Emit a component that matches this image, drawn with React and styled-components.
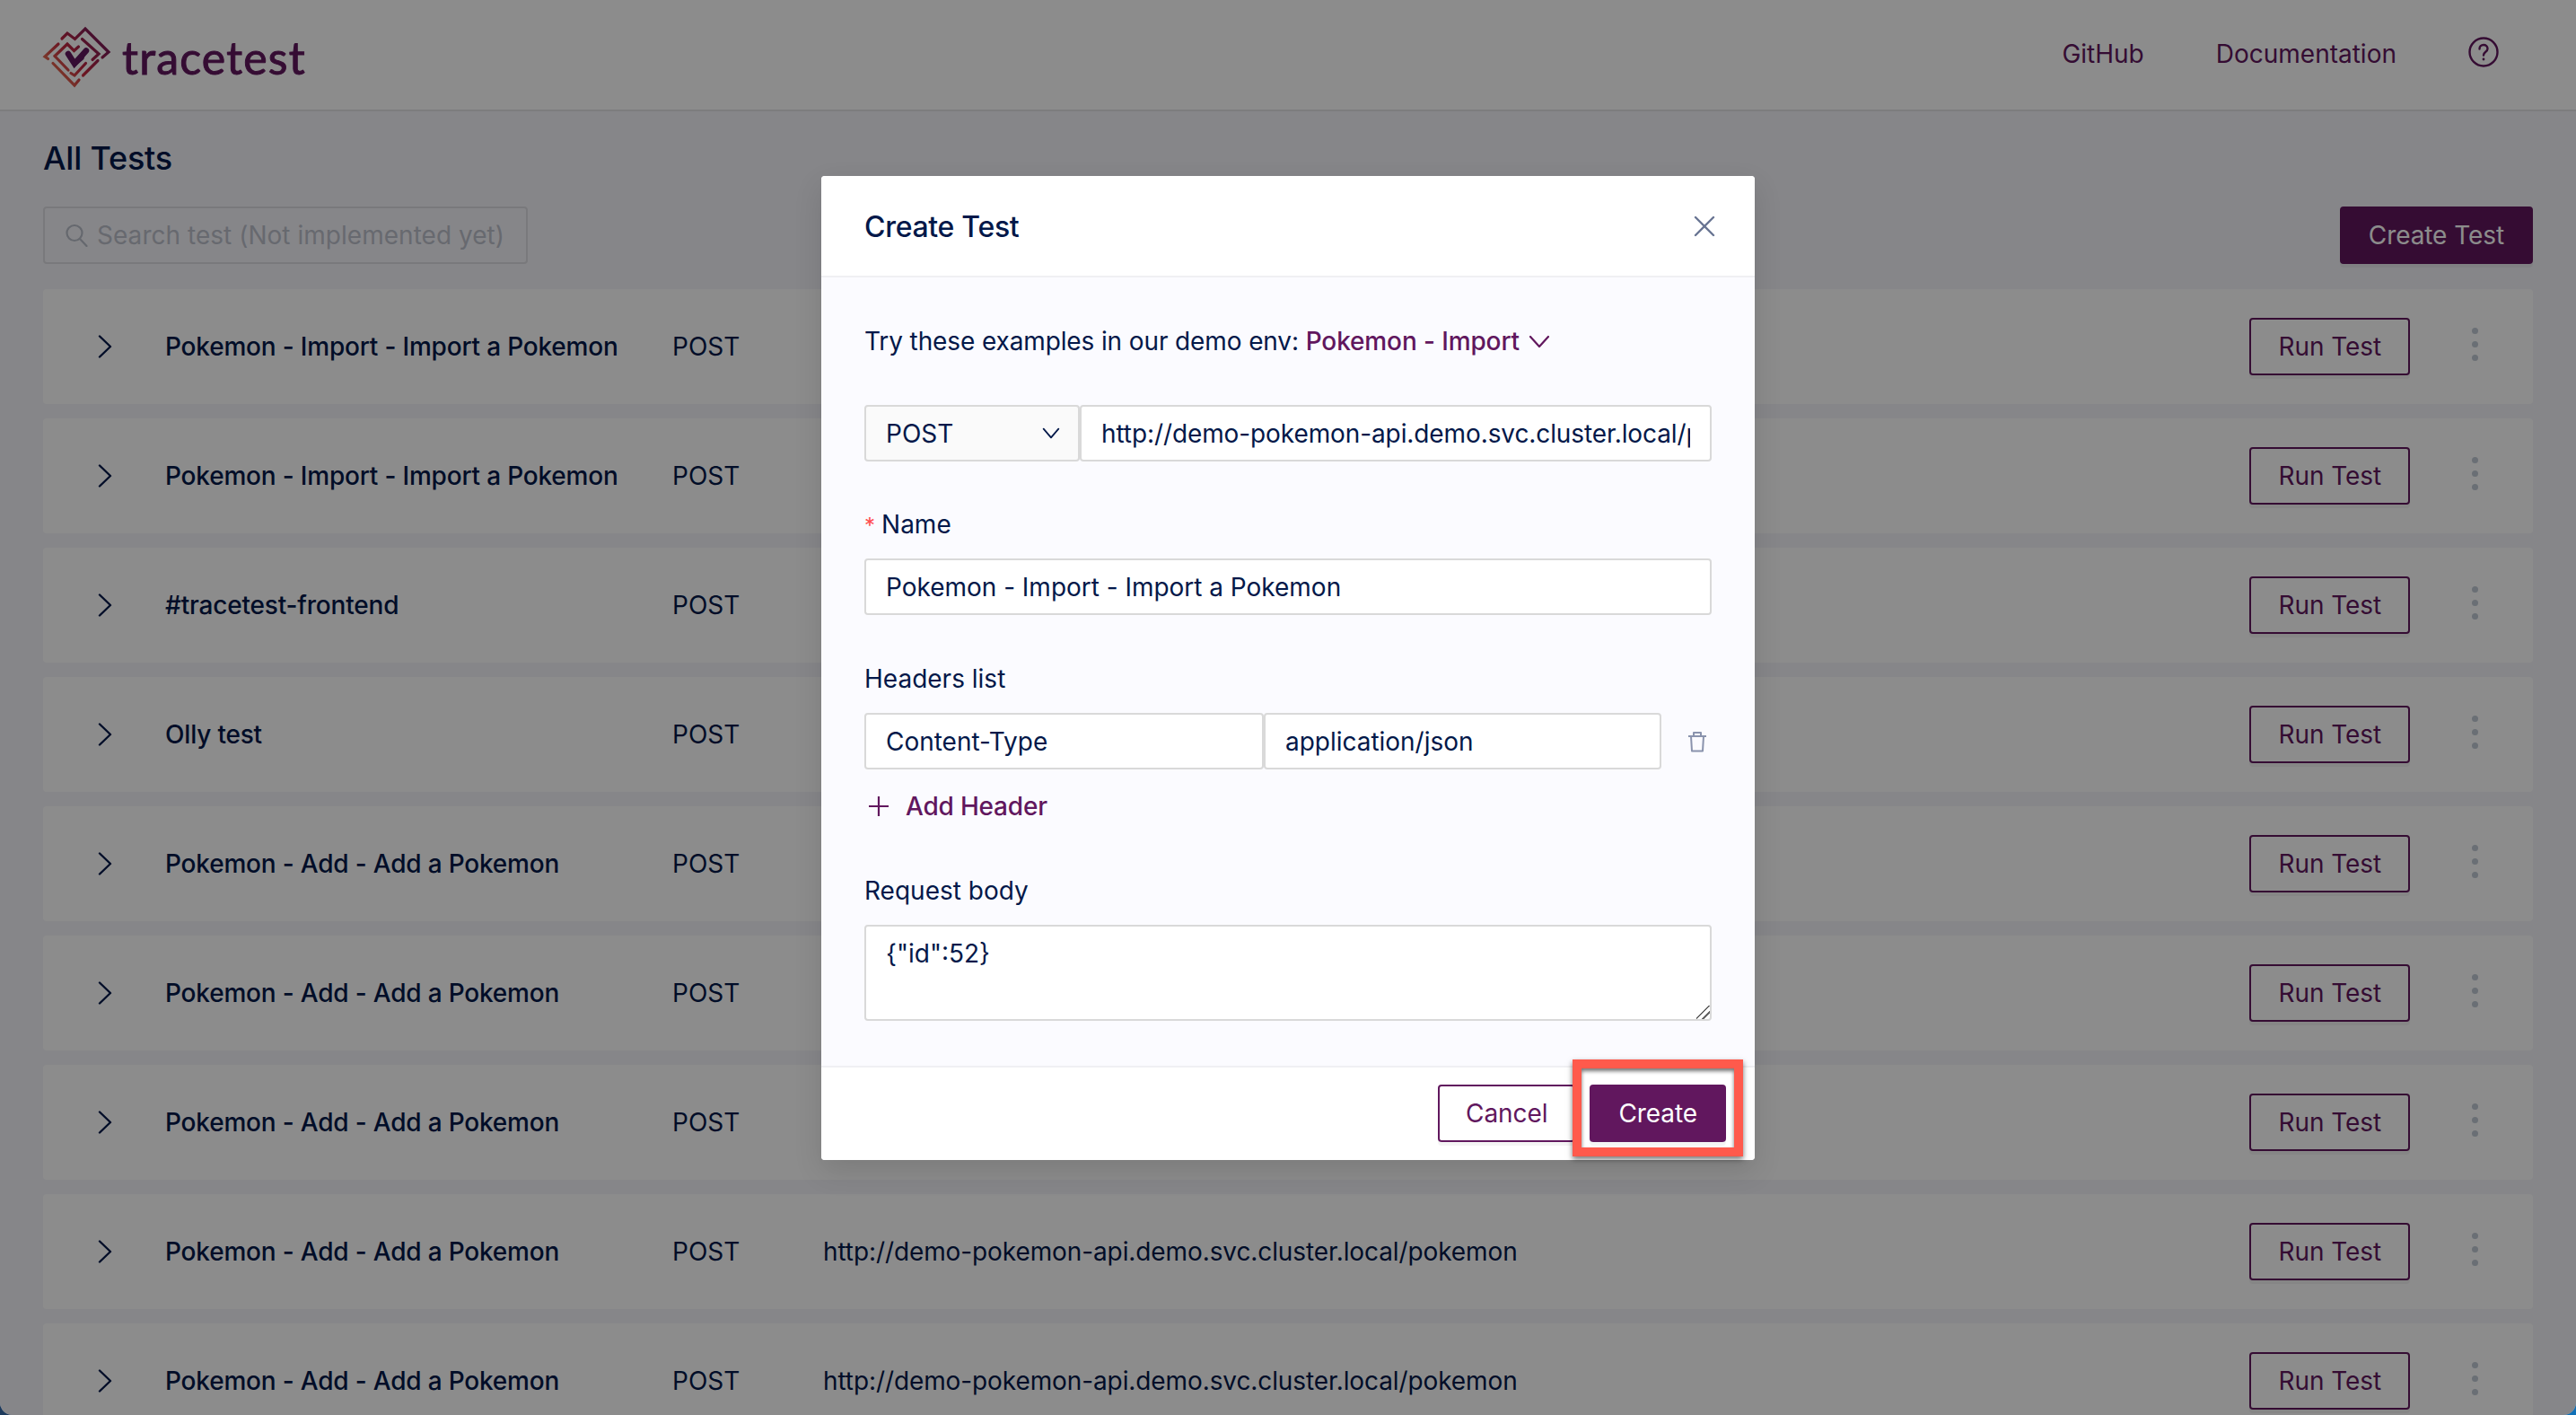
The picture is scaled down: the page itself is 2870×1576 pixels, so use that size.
import React from 'react';
import styled, { createGlobalStyle } from 'styled-components';

const Global = createGlobalStyle`
  html, body { margin: 0; padding: 0; height: 1576px; overflow: hidden; }
  body {
    background: linear-gradient(to right, #1d3a5c, #0f70b7);
    font-family: Inter, "Liberation Sans", sans-serif;
    color: #031849;
    -webkit-font-smoothing: antialiased;
  }
  * { box-sizing: border-box; }
`;

const Page = styled.div`
  position: relative;
  height: 1576px;
  overflow: hidden;
  background: #f5f5fa;
  border-radius: 0 0 14px 14px;
`;

const Header = styled.header`
  height: 124px;
  background: #fff;
  border-bottom: 2px solid #e3e3e6;
  display: flex;
  align-items: center;
  padding: 0 86px 2px 44px;
`;

const Brand = styled.div`
  display: flex;
  align-items: center;
  gap: 8px;
  flex: 1;
  padding-top: 8px;
`;

const BrandName = styled.span`
  font-family: Lato, sans-serif;
  font-size: 50px;
  line-height: 64px;
  font-weight: 400;
  letter-spacing: 1.2px;
  -webkit-text-stroke: 1px #61175e;
  color: #61175e;
`;

const NavLink = styled.a`
  font-size: 28px;
  line-height: 40px;
  color: #61175e;
  margin-right: ${p => p.$gap}px;
`;

const HelpSlot = styled.span`
  display: flex;
  margin-top: -4px;
`;

const Main = styled.main`
  padding: 26px 48px 0;
`;

const Title = styled.h1`
  margin: 0 0 28px;
  font-size: 36px;
  line-height: 52px;
  font-weight: 500;
  letter-spacing: -0.2px;
`;

const Toolbar = styled.div`
  display: flex;
  justify-content: space-between;
  margin-bottom: 28px;
`;

const Search = styled.label`
  width: 540px;
  height: 64px;
  background: transparent;
  border: 2px solid #dcdce2;
  border-radius: 4px;
  display: flex;
  align-items: center;
  gap: 10px;
  padding: 0 22px;
  color: #b9bdc9;
`;

const SearchInput = styled.input`
  flex: 1;
  min-width: 0;
  border: 0;
  outline: 0;
  background: transparent;
  font: 400 28px Inter, sans-serif;
  letter-spacing: 0.03px;
  padding: 0;
  &::placeholder { color: #bcc0cb; opacity: 1; }
`;

const Button = styled.button`
  height: 64px;
  padding: 0 ${p => p.$px}px;
  border-radius: 4px;
  border: 2px solid #61175e;
  background: ${p => (p.$primary ? '#61175e' : '#fff')};
  color: ${p => (p.$primary ? '#fff' : '#61175e')};
  font: 400 28px Inter, sans-serif;
  letter-spacing: -0.08px;
  box-shadow: 0 4px 0 rgba(0, 0, 0, 0.045);
  white-space: nowrap;
`;

const List = styled.div`
  display: flex;
  flex-direction: column;
  gap: 16px;
`;

const Row = styled.div`
  height: 128px;
  flex: none;
  background: #fff;
  border-radius: 4px;
  display: flex;
  align-items: center;
  padding: 0 55px 0 56px;
  font-size: 28px;
`;

const Chevron = styled.span`
  width: 80px;
  display: flex;
  flex: none;
  padding-left: 1px;
`;

const Name = styled.span`
  width: 565px;
  flex: none;
  font-weight: 500;
  letter-spacing: -0.19px;
`;

const Method = styled.span`
  width: 168px;
  flex: none;
`;

const Url = styled.span`
  flex: 1;
  white-space: nowrap;
  letter-spacing: -0.1px;
`;

const Kebab = styled.div`
  width: 18px;
  margin-left: 63px;
  margin-right: 1px;
  margin-top: -6px;
  display: flex;
  flex-direction: column;
  align-items: center;
  gap: 8px;
`;

const Dot = styled.i`
  width: 7px;
  height: 7px;
  border-radius: 50%;
  background: #c2cad5;
`;

const Overlay = styled.div`
  position: absolute;
  inset: 0;
  background: rgba(0, 0, 0, 0.45);
  display: flex;
  justify-content: center;
  padding-top: 196px;
`;

const Modal = styled.section`
  position: relative;
  width: 1040px;
  height: 1096px;
  border-radius: 4px;
  background: #fbfbff;
  box-shadow: 0 12px 32px rgba(0, 0, 0, 0.12);
  display: flex;
  flex-direction: column;
`;

const ModalHead = styled.div`
  height: 113px;
  flex: none;
  background: #fff;
  border-radius: 4px 4px 0 0;
  border-bottom: 2px solid #f0f0f3;
  display: flex;
  align-items: center;
  justify-content: space-between;
  padding: 0 32px 0 48px;
`;

const ModalTitle = styled.h2`
  margin: 2px 0 0;
  font-size: 32px;
  line-height: 44px;
  font-weight: 500;
  letter-spacing: -0.3px;
`;

const CloseSlot = styled.span`
  display: flex;
  margin-right: 12px;
`;

const ModalBody = styled.div`
  flex: 1;
  padding: 49px 48px 0;
  font-size: 28px;
`;

const Examples = styled.div`
  display: flex;
  align-items: center;
  height: 44px;
  margin-bottom: 49px;
  white-space: pre;
  letter-spacing: -0.12px;
`;

const ExampleLink = styled.span`
  color: #61175e;
  font-weight: 500;
  margin-right: 10px;
`;

const Joined = styled.div`
  display: flex;
  align-items: center;
`;

const Select = styled.div`
  width: 240px;
  height: 63px;
  flex: none;
  border: 2px solid #d9d9d9;
  border-radius: 4px;
  background: #fafafa;
  display: flex;
  align-items: center;
  justify-content: space-between;
  padding: 0 20px 0 22px;
`;

const Field = styled.input`
  display: block;
  width: ${p => (p.$w ? `${p.$w}px` : '100%')};
  height: 63px;
  flex: ${p => (p.$w ? 'none' : '1')};
  min-width: 0;
  border: 2px solid #d9d9d9;
  border-radius: 4px;
  background: #fff;
  color: #031849;
  font: 400 28px Inter, sans-serif;
  letter-spacing: -0.02px;
  padding: 0 22px;
  outline: 0;
`;

const UrlField = styled(Field)`
  letter-spacing: -0.1px;
`;

const Label = styled.div`
  height: 44px;
  line-height: 44px;
  margin: ${p => p.$top}px 0 16px;
`;

const Required = styled.span`
  color: #ff4d4f;
  margin-right: 7px;
  font-size: 24px;
`;

const TrashSlot = styled.span`
  display: flex;
  margin-left: 29px;
`;

const AddHeader = styled.div`
  display: flex;
  align-items: center;
  gap: 19px;
  height: 44px;
  margin-top: 19px;
  padding-left: 5px;
  color: #61175e;
  font-weight: 500;
  letter-spacing: -0.2px;
`;

const Body = styled.textarea`
  display: block;
  width: 100%;
  height: 107px;
  border: 2px solid #d9d9d9;
  border-radius: 4px;
  background: #fff;
  color: #031849;
  font: 400 28px/40px Inter, sans-serif;
  padding: 10px 22px;
  outline: 0;
  resize: vertical;
  &::-webkit-resizer {
    background: linear-gradient(135deg, transparent 0 44%, #666 44% 52%, transparent 52% 70%, #666 70% 78%, transparent 78%);
  }
`;

const ModalFoot = styled.div`
  position: relative;
  height: 105px;
  flex: none;
  background: #fff;
  border-top: 2px solid #f0f0f3;
  border-radius: 0 0 4px 4px;
  display: flex;
  justify-content: flex-end;
  gap: 16px;
  padding: 19px 32px 0 0;
`;

const Highlight = styled.div`
  position: absolute;
  left: 837px;
  top: -9px;
  width: 190px;
  height: 108px;
  border: 10px solid #ff5a4c;
  box-shadow: 0 3px 6px rgba(0, 0, 0, 0.55), inset 0 3px 4px rgba(0, 0, 0, 0.55);
  pointer-events: none;
`;

const Logo = () => (
  <svg width="84" height="72" viewBox="0 0 84 72" fill="none" strokeLinecap="round" strokeLinejoin="miter" strokeWidth="3.2">
    <defs>
      <linearGradient id="lg" x1="78" y1="8" x2="8" y2="66" gradientUnits="userSpaceOnUse">
        <stop offset="0" stopColor="#61175e" />
        <stop offset="0.55" stopColor="#c2273f" />
        <stop offset="1" stopColor="#f5925a" />
      </linearGradient>
    </defs>
    <g stroke="url(#lg)">
      <path d="M25 15l6-6 8.500 6.500L51 4l26 26-7 6" />
      <path d="M21 21L6 35l3.500 2.500" />
      <path d="M15 42.500L39 67l5-6" />
      <path d="M47.500 15.500L66 32l-7 6.500" />
      <path d="M17 34.500L31 21l7.500 7.500 5-4.500" />
      <path d="M17 34.500L32 50" />
      <path d="M35 53.500l4 2.500 12.500-13.500" />
      <path d="M48.500 56L65 39.500" />
    </g>
    <path d="M32 32l7 11 13-14.500" stroke="#61175e" strokeWidth="6.500" strokeLinecap="round" />
    <path d="M30 33l9.300 10 13-14-3 9-10 8.500z" fill="#61175e" />
  </svg>
);

const SearchIcon = () => (
  <svg width="26" height="26" viewBox="0 0 26 26" fill="none" stroke="currentColor" strokeWidth="2.200">
    <circle cx="11" cy="10.500" r="8.500" />
    <path d="M17 17l7.500 8" strokeLinecap="round" />
  </svg>
);

const HelpIcon = () => (
  <svg width="34" height="34" viewBox="0 0 34 34" fill="none" stroke="#61175e" strokeWidth="2.400">
    <circle cx="17" cy="17" r="15.500" />
    <path d="M12.500 13.500c0-2.800 2-4.500 4.500-4.500s4.500 1.700 4.500 4.200c0 3.600-4.500 3.600-4.500 7.300" strokeLinecap="round" />
    <circle cx="17" cy="25" r="1.400" fill="#61175e" stroke="none" />
  </svg>
);

const RightChevron = () => (
  <svg width="24" height="26" viewBox="0 0 24 26" fill="none" stroke="#031849" strokeWidth="2.400">
    <path d="M6 1.500L18 13 6 24.500" strokeLinecap="round" strokeLinejoin="round" />
  </svg>
);

const DownChevron = ({ color = '#031849', w = 24, h = 15 }) => (
  <svg width={w} height={h} viewBox="0 0 24 15" preserveAspectRatio="none" fill="none" stroke={color} strokeWidth="2.200">
    <path d="M2 2l10 11L22 2" strokeLinecap="round" strokeLinejoin="round" />
  </svg>
);

const CloseIcon = () => (
  <svg width="24" height="24" viewBox="0 0 24 24" fill="none" stroke="#687492" strokeWidth="2.400">
    <path d="M2 2l20 20M22 2L2 22" strokeLinecap="round" />
  </svg>
);

const TrashIcon = () => (
  <svg width="22" height="24" viewBox="0 0 22 24" fill="none" stroke="#8a93ad" strokeWidth="2">
    <path d="M1 6h20M4 6l1 16.500h12L18 6M7 6V2h8v4" strokeLinejoin="round" />
  </svg>
);

const PlusIcon = () => (
  <svg width="22" height="24" viewBox="0 0 22 24" fill="none" stroke="#61175e" strokeWidth="2.200">
    <path d="M11 1v22M0 12h22" />
  </svg>
);

const imp = 'Pokemon - Import - Import a Pokemon';
const add = 'Pokemon - Add - Add a Pokemon';
const base = 'http://demo-pokemon-api.demo.svc.cluster.local/pokemon';
const rows = [
  { name: imp },
  { name: imp },
  { name: '#tracetest-frontend' },
  { name: 'Olly test' },
  { name: add },
  { name: add },
  { name: add },
  { name: add, url: base },
  { name: add, url: base },
];

export default function App() {
  return (
    <Page>
      <Global />
      <Header>
        <Brand>
          <Logo />
          <BrandName>tracetest</BrandName>
        </Brand>
        <NavLink $gap={80}>GitHub</NavLink>
        <NavLink $gap={80}>Documentation</NavLink>
        <HelpSlot><HelpIcon /></HelpSlot>
      </Header>
      <Main>
        <Title>All Tests</Title>
        <Toolbar>
          <Search>
            <SearchIcon />
            <SearchInput placeholder="Search test (Not implemented yet)" readOnly />
          </Search>
          <Button $primary $px={30}>Create Test</Button>
        </Toolbar>
        <List>
          {rows.map((row, i) => (
            <Row key={i}>
              <Chevron><RightChevron /></Chevron>
              <Name>{row.name}</Name>
              <Method>POST</Method>
              <Url>{row.url}</Url>
              <Button $px={30}>Run Test</Button>
              <Kebab><Dot /><Dot /><Dot /></Kebab>
            </Row>
          ))}
        </List>
      </Main>
      <Overlay>
        <Modal>
          <ModalHead>
            <ModalTitle>Create Test</ModalTitle>
            <CloseSlot><CloseIcon /></CloseSlot>
          </ModalHead>
          <ModalBody>
            <Examples>
              Try these examples in our demo env: <ExampleLink>Pokemon - Import</ExampleLink>
              <DownChevron color="#61175e" />
            </Examples>
            <Joined>
              <Select>POST <DownChevron w={20} h={13} /></Select>
              <UrlField readOnly value={`${base}/import`} />
            </Joined>
            <Label $top={48}><Required>*</Required>Name</Label>
            <Field readOnly value={imp} />
            <Label $top={49}>Headers list</Label>
            <Joined>
              <Field $w={445} readOnly value="Content-Type" />
              <Field $w={443} readOnly value="application/json" />
              <TrashSlot><TrashIcon /></TrashSlot>
            </Joined>
            <AddHeader><PlusIcon />Add Header</AddHeader>
            <Label $top={50}>Request body</Label>
            <Body readOnly value={'{"id":52}'} />
          </ModalBody>
          <ModalFoot>
            <Button $px={29}>Cancel</Button>
            <Button $primary $px={30}>Create</Button>
            <Highlight />
          </ModalFoot>
        </Modal>
      </Overlay>
    </Page>
  );
}
